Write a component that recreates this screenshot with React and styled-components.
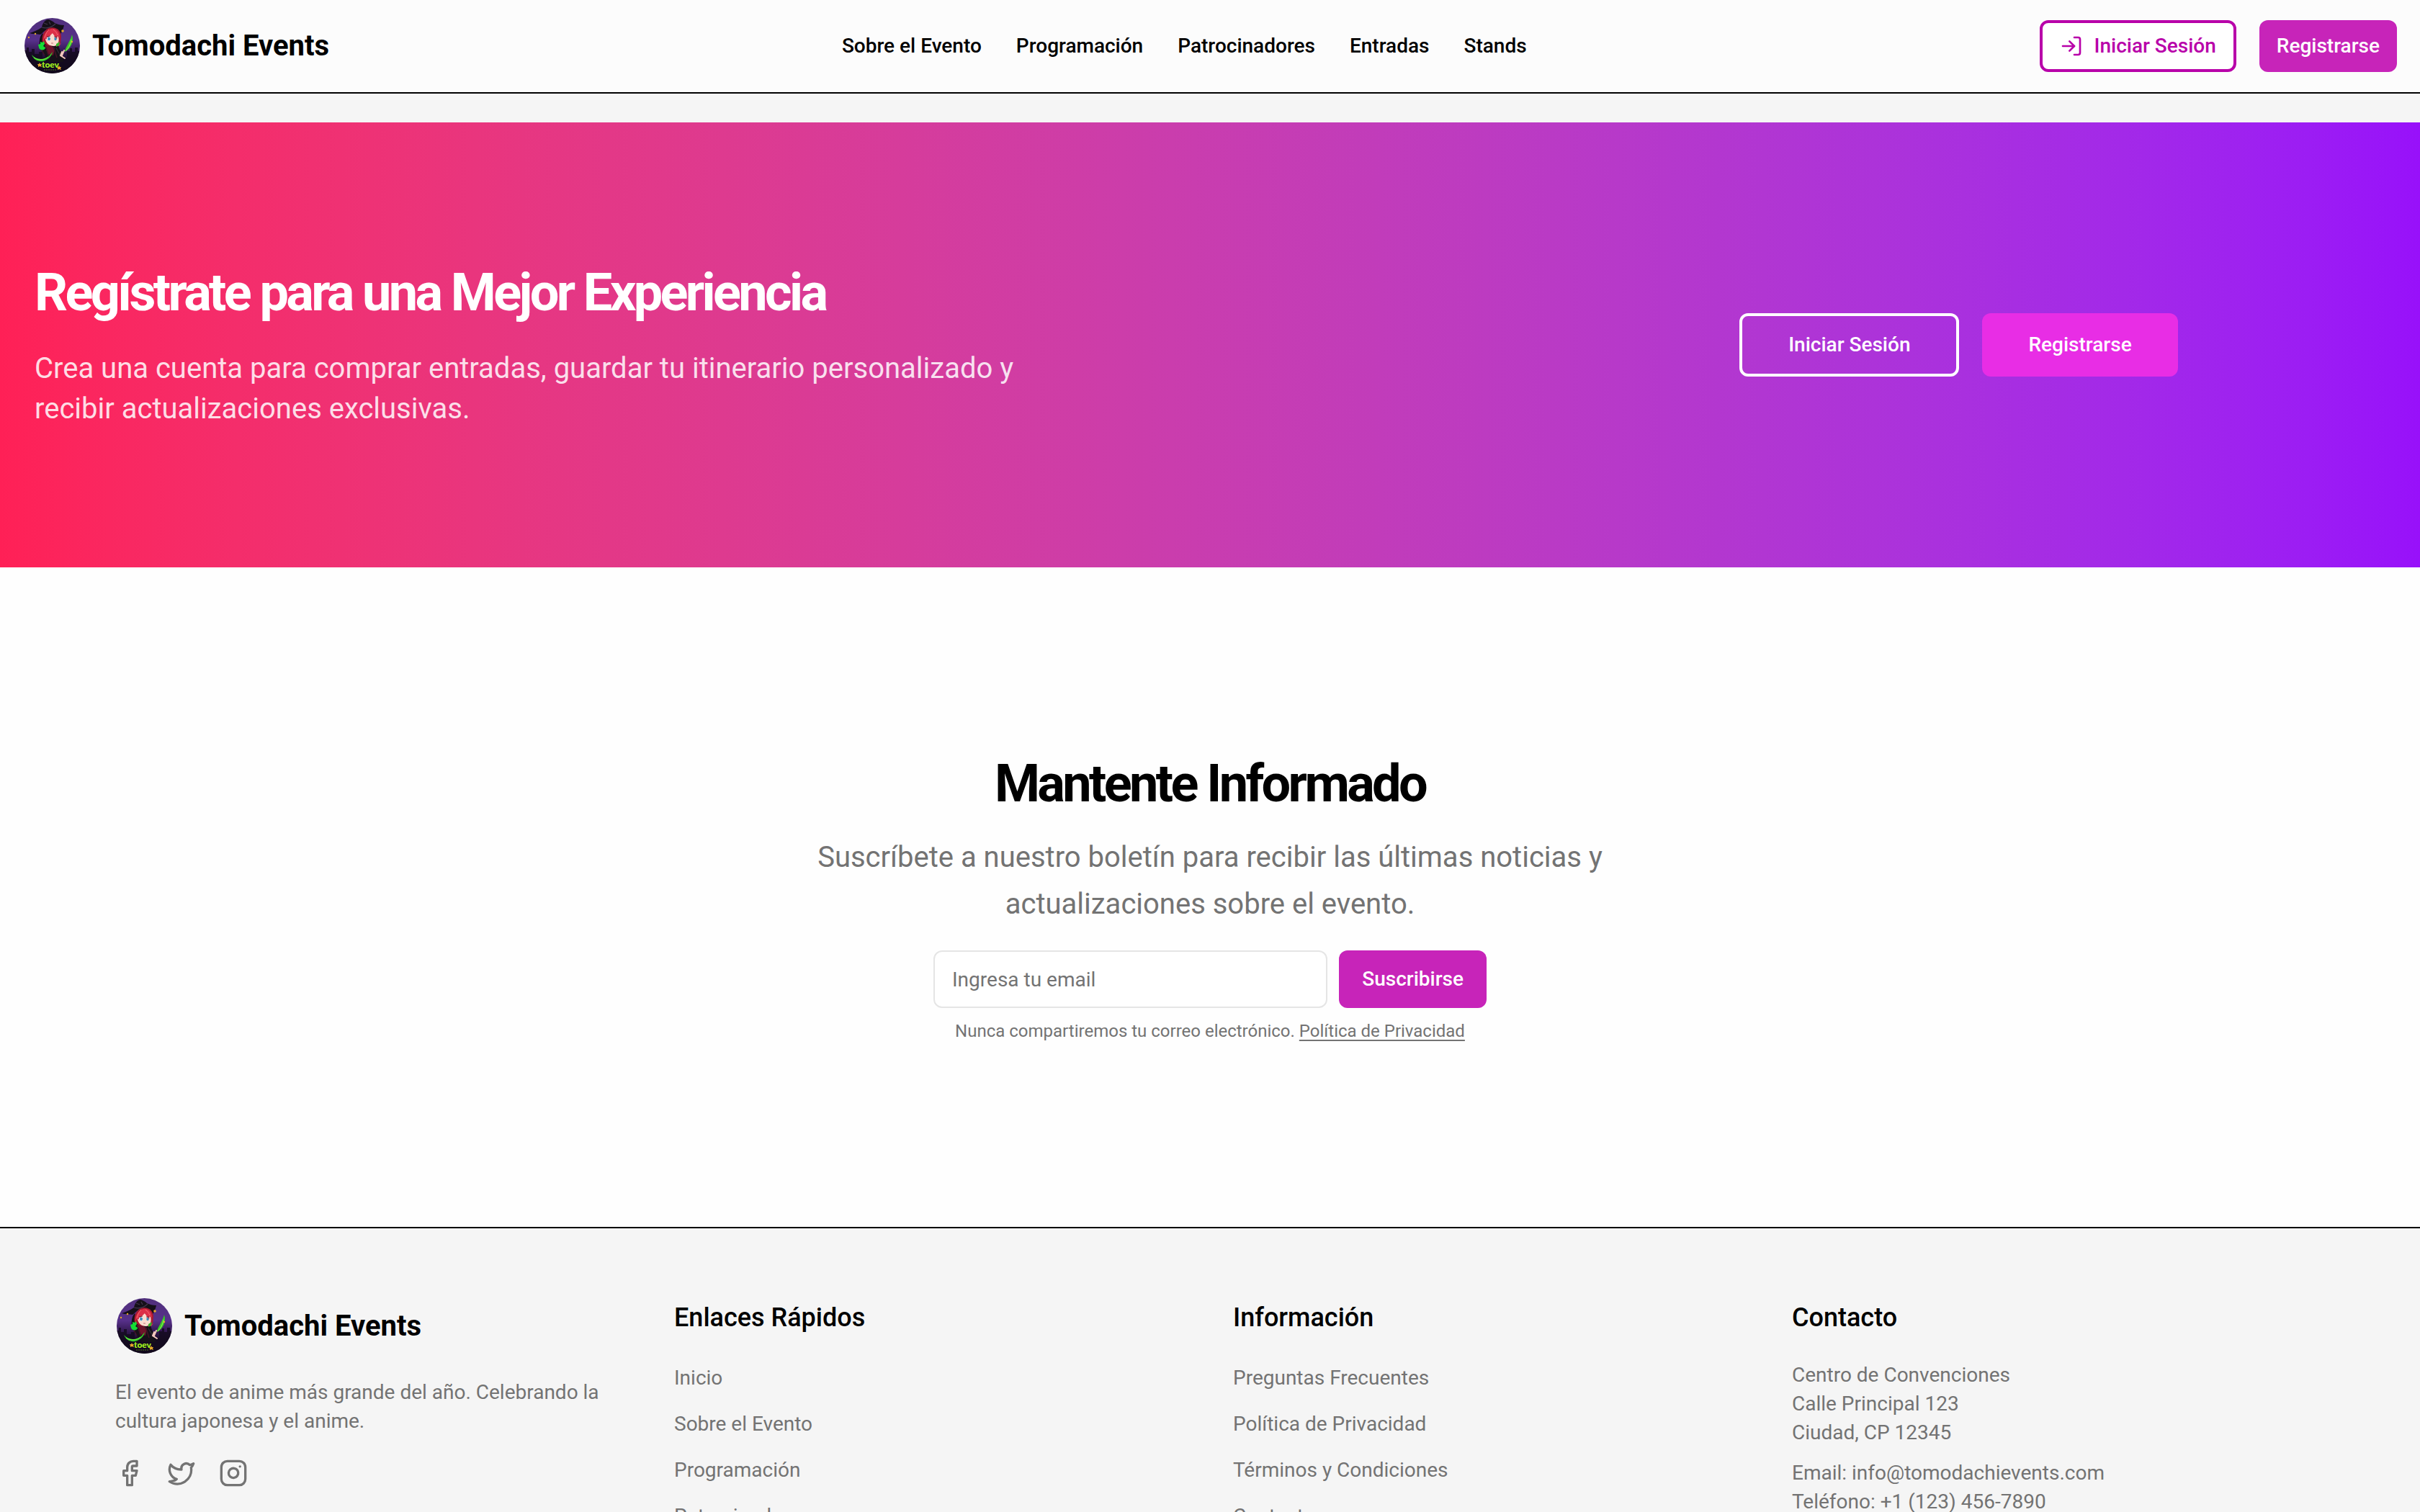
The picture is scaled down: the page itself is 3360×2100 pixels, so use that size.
import React from "react";
import styled, { createGlobalStyle, css } from "styled-components";
import { Facebook, Instagram, LogIn, Twitter } from "lucide-react";

const GlobalStyle = createGlobalStyle`
  *, *::before, *::after { box-sizing: border-box; }
  body {
    margin: 0;
    background: #f5f5f5;
    color: #000;
    font-family: Roboto, "Liberation Sans", sans-serif;
    font-size: 28px;
    line-height: 40px;
  }
  h1, h2, h3, p, ul { margin: 0; padding: 0; }
  ul { list-style: none; }
  a { color: inherit; text-decoration: none; }
  button, input { font: inherit; }
`;

const Header = styled.header`
  display: flex;
  align-items: center;
  justify-content: space-between;
  padding: 24px 32px;
  background: #fcfcfc;
  border-bottom: 2px solid #000;
`;

const Brand = styled.a`
  display: inline-flex;
  align-items: center;
  gap: 16px;
  font-size: 40px;
  font-weight: 700;
  line-height: 56px;
`;

const Nav = styled.nav`
  display: flex;
  gap: 48px;
  font-weight: 500;
`;

const Actions = styled.div`
  display: flex;
  align-items: center;
  gap: 32px;
`;

const variants = {
  primary: css`
    background: #c724b9;
    color: #fff;
    border: 0;
  `,
  outline: css`
    background: #fff;
    color: #b800a9;
    border: 4px solid #b800a9;
  `,
  ghost: css`
    background: transparent;
    color: #fff;
    border: 4px solid #fff;
  `,
  bright: css`
    background: #e82de5;
    color: #fff;
    border: 0;
  `,
};

const sizes = {
  small: css`
    height: 72px;
    padding: 0 24px;
  `,
  medium: css`
    height: 80px;
    padding: 0 32px;
  `,
  large: css`
    height: 88px;
    padding: 0 64px;
  `,
};

const Button = styled.button`
  display: inline-flex;
  align-items: center;
  justify-content: center;
  gap: 16px;
  border-radius: 12px;
  font-weight: 500;
  white-space: nowrap;
  cursor: pointer;
  ${(p) => variants[p.$variant]}
  ${(p) => sizes[p.$size]}
`;

const Hero = styled.section`
  display: grid;
  grid-template-columns: minmax(0, 17fr) minmax(0, 10fr);
  align-items: center;
  gap: 64px;
  margin-top: 40px;
  padding: 192px 48px;
  background: linear-gradient(to right in oklab, #ff2056, #9810fa);
  color: #fff;
`;

const HeroText = styled.div`
  display: flex;
  flex-direction: column;
  gap: 32px;
`;

const Title = styled.h2`
  font-size: 72px;
  font-weight: 700;
  line-height: 90px;
  letter-spacing: -0.05em;
`;

const HeroLead = styled.p`
  max-width: 1400px;
  font-size: 40px;
  line-height: 56px;
  color: rgba(255, 255, 255, 0.85);
`;

const HeroActions = styled.div`
  display: flex;
  justify-content: center;
  gap: 32px;
`;

const Newsletter = styled.section`
  display: flex;
  flex-direction: column;
  align-items: center;
  padding: 256px 48px;
  background: #fefefe;
  text-align: center;
`;

const NewsletterLead = styled.p`
  max-width: 1200px;
  margin-top: 24px;
  font-size: 40px;
  line-height: 65px;
  color: #737373;
`;

const Form = styled.form`
  display: flex;
  gap: 16px;
  width: 100%;
  max-width: 768px;
  margin-top: 32px;
`;

const EmailInput = styled.input`
  flex: 1;
  min-width: 0;
  height: 80px;
  padding: 0 24px;
  border: 2px solid #e5e5e5;
  border-radius: 12px;
  background: #fff;
  &::placeholder { color: #737373; opacity: 1; }
`;

const Note = styled.p`
  margin-top: 16px;
  font-size: 24px;
  line-height: 32px;
  color: #737373;
  a {
    text-decoration: underline;
    text-decoration-thickness: 2px;
    text-underline-offset: 4px;
  }
`;

const Footer = styled.footer`
  display: grid;
  grid-template-columns: repeat(4, minmax(0, 1fr));
  gap: 64px;
  padding: 96px 160px;
  border-top: 2px solid #000;
  background: #f5f5f5;
  color: #737373;
`;

const Column = styled.div`
  display: flex;
  flex-direction: column;
  align-items: flex-start;
  gap: 32px;
  ${Brand} { color: #000; }
`;

const ColumnTitle = styled.h3`
  font-size: 36px;
  font-weight: 500;
  line-height: 56px;
  color: #000;
`;

const LinkList = styled.ul`
  display: flex;
  flex-direction: column;
  gap: 16px;
  line-height: 48px;
`;

const Contact = styled.div`
  display: flex;
  flex-direction: column;
  gap: 16px;
`;

const Social = styled.div`
  display: flex;
  gap: 32px;
  a { display: flex; }
`;

const LogoArt = styled.svg`
  display: block;
  width: 80px;
  height: 80px;
`;

function Logo({ id }) {
  return (
    <LogoArt viewBox="0 0 80 80" aria-hidden="true">
      <defs>
        <linearGradient id={`${id}-sky`} x1="0" y1="0" x2="0" y2="1">
          <stop offset="0" stopColor="#50307c" />
          <stop offset="0.4" stopColor="#57308a" />
          <stop offset="0.58" stopColor="#351a55" />
          <stop offset="0.75" stopColor="#170b24" />
          <stop offset="1" stopColor="#060309" />
        </linearGradient>
        <clipPath id={`${id}-disc`}>
          <circle cx="40.5" cy="39.5" r="38.5" />
        </clipPath>
      </defs>
      <g clipPath={`url(#${id}-disc)`}>
        <rect width="80" height="80" fill={`url(#${id}-sky)`} />
        <path d="M0 46h5v-4h3v6h4v-4h4v7h6v-3h5v8h34v-9h4v-4h3v5h4v-6h4v5h4v33H0z" fill="#140a20" opacity="0.85" />
        {/* witch hat */}
        <path d="M9 22c6-2 11-4 17-8 1-6 4-10 9-11 4 1 7 3 9 5 4 2 8 3 13 3-1 5-3 9-6 14-4-9-10-12-16-9-5 2-8 6-11 8-5-1-10 0-15-2z" fill="#151019" />
        <path d="M26 14c7 2 14 0 19-5M29 8l5 2M36 6l2 4" stroke="#42364b" strokeWidth="1.3" fill="none" />
        {/* cloak */}
        <path d="M27 22c-5 6-5 14-3 21l7 12 6 7h19c0-7-2-12-5-17l-3-9-8 3-7-4z" fill="#161119" />
        <path d="M30 38l8 1 6 4-2 10-8-2z" fill="#6c142a" />
        <path d="M25 44l5 9M32 42l4 13M42 41l5 15" stroke="#421326" strokeWidth="1.5" />
        <path d="M46 43l7 12" stroke="#3b3541" strokeWidth="1" />
        {/* hair and face */}
        <path d="M27 35c-2-9 2-17 9-20 9-3 17 3 17 12l-1 9-6 4-12-1z" fill="#a91930" />
        <path d="M31 30c4-2 4-6 8-9l10 6c2 7-1 12-6 13-7 0-11-4-12-10z" fill="#fbdccf" />
        <path d="M28 33c0-8 4-15 11-17 7-1 12 4 12 13l-3-4-1 6-6-9-5 5-2 6-3-5z" fill="#dc3048" />
        <path d="M36 17c-4 4-5 8-6 12M42 17c3 2 5 5 6 8" stroke="#f56a72" strokeWidth="1" fill="none" />
        <path d="M33 28l5-1v5c-2 2-4 1-5-1z" fill="#fff" />
        <ellipse cx="36" cy="30" rx="2" ry="2.4" fill="#3c8fbc" />
        <ellipse cx="45" cy="30" rx="1.7" ry="2.3" fill="#3c8fbc" />
        <path d="M33 27l5-1M43 27l4 0" stroke="#542033" strokeWidth="0.8" />
        <path d="M39 36h3" stroke="#b95662" strokeWidth="0.8" />
        <path d="M44 38l3 1 6-3-3 4z" fill="#db304a" />
        <path d="M46 37l5-3-1 5-4 2z" fill="#33b52c" />
        {/* feet and hands */}
        <path d="M54 48l-2 5 6 4M57 46l-3 7" stroke="#f2c7bd" strokeWidth="2" fill="none" strokeLinecap="round" />
        {/* green familiar and blades */}
        <path d="M24 34l3 1 2-2 1 4-2 3 3 2c0 4-8 5-9 0l-1-4 3-1z" fill="#16dc35" />
        <path d="M68 24c3 9-1 19-10 24 0-6 7-13 10-24z" fill="#3bc628" />
        <path d="M67 31c-1 7-4 12-8 16" stroke="#a2ff62" strokeWidth="0.8" fill="none" />
        <path d="M12 52c6 7 16 8 24 2l5-6c-3 14-23 19-29 4z" fill="#32c52a" />
        <path d="M15 56c6 4 14 4 20-1" stroke="#91f94f" strokeWidth="0.8" fill="none" />
        {/* stars */}
        <g fill="#e6a72c">
          <circle cx="55" cy="19" r="1.8" />
          <circle cx="8" cy="28" r="1.2" />
          <circle cx="17" cy="23" r="1.2" />
          <circle cx="68" cy="34" r="1.2" />
          <path d="M23 63l1 2h2l-1 2 1 2-3-1-2 1v-2l-1-2h2zM50 67l1 2h2l-1 2 1 2-3-1-2 1v-2l-1-2h2z" />
        </g>
        <text x="38" y="70" textAnchor="middle" fontFamily="Lato, sans-serif" fontSize="12" fontWeight="900" fill="#a1f51d">toev</text>
        <path d="M29 73h18" stroke="#507527" strokeWidth="1" strokeDasharray="2 1" />
      </g>
    </LogoArt>
  );
}

const navLinks = ["Sobre el Evento", "Programación", "Patrocinadores", "Entradas", "Stands"];

const linkColumns = [
  { title: "Enlaces Rápidos", links: ["Inicio", "Sobre el Evento", "Programación", "Patrocinadores"] },
  { title: "Información", links: ["Preguntas Frecuentes", "Política de Privacidad", "Términos y Condiciones", "Contacto"] },
];

const socials = [
  { name: "Facebook", Icon: Facebook },
  { name: "Twitter", Icon: Twitter },
  { name: "Instagram", Icon: Instagram },
];

export default function App() {
  return (
    <>
      <GlobalStyle />
      <Header>
        <Brand href="#">
          <Logo id="header-logo" />
          Tomodachi Events
        </Brand>
        <Nav>
          {navLinks.map((label) => (
            <a key={label} href="#">{label}</a>
          ))}
        </Nav>
        <Actions>
          <Button type="button" $variant="outline" $size="small">
            <LogIn size={32} aria-hidden="true" />
            Iniciar Sesión
          </Button>
          <Button type="button" $variant="primary" $size="small">Registrarse</Button>
        </Actions>
      </Header>
      <main>
        <Hero>
          <HeroText>
            <Title>Regístrate para una Mejor Experiencia</Title>
            <HeroLead>
              Crea una cuenta para comprar entradas, guardar tu itinerario personalizado y recibir
              actualizaciones exclusivas.
            </HeroLead>
          </HeroText>
          <HeroActions>
            <Button type="button" $variant="ghost" $size="large">Iniciar Sesión</Button>
            <Button type="button" $variant="bright" $size="large">Registrarse</Button>
          </HeroActions>
        </Hero>
        <Newsletter>
          <Title>Mantente Informado</Title>
          <NewsletterLead>
            Suscríbete a nuestro boletín para recibir las últimas noticias y actualizaciones sobre el
            evento.
          </NewsletterLead>
          <Form onSubmit={(e) => e.preventDefault()}>
            <EmailInput type="email" placeholder="Ingresa tu email" aria-label="Email" />
            <Button type="submit" $variant="primary" $size="medium">Suscribirse</Button>
          </Form>
          <Note>
            Nunca compartiremos tu correo electrónico. <a href="#">Política de Privacidad</a>
          </Note>
        </Newsletter>
      </main>
      <Footer>
        <Column>
          <Brand href="#">
            <Logo id="footer-logo" />
            Tomodachi Events
          </Brand>
          <p>El evento de anime más grande del año. Celebrando la cultura japonesa y el anime.</p>
          <Social>
            {socials.map(({ name, Icon }) => (
              <a key={name} href="#" aria-label={name}>
                <Icon size={40} />
              </a>
            ))}
          </Social>
        </Column>
        {linkColumns.map(({ title, links }) => (
          <Column key={title}>
            <ColumnTitle>{title}</ColumnTitle>
            <LinkList>
              {links.map((label) => (
                <li key={label}><a href="#">{label}</a></li>
              ))}
            </LinkList>
          </Column>
        ))}
        <Column>
          <ColumnTitle>Contacto</ColumnTitle>
          <Contact>
            <p>
              Centro de Convenciones<br />
              Calle Principal 123<br />
              Ciudad, CP 12345
            </p>
            <p>
              Email: info@tomodachievents.com<br />
              Teléfono: +1 (123) 456-7890
            </p>
          </Contact>
        </Column>
      </Footer>
    </>
  );
}
